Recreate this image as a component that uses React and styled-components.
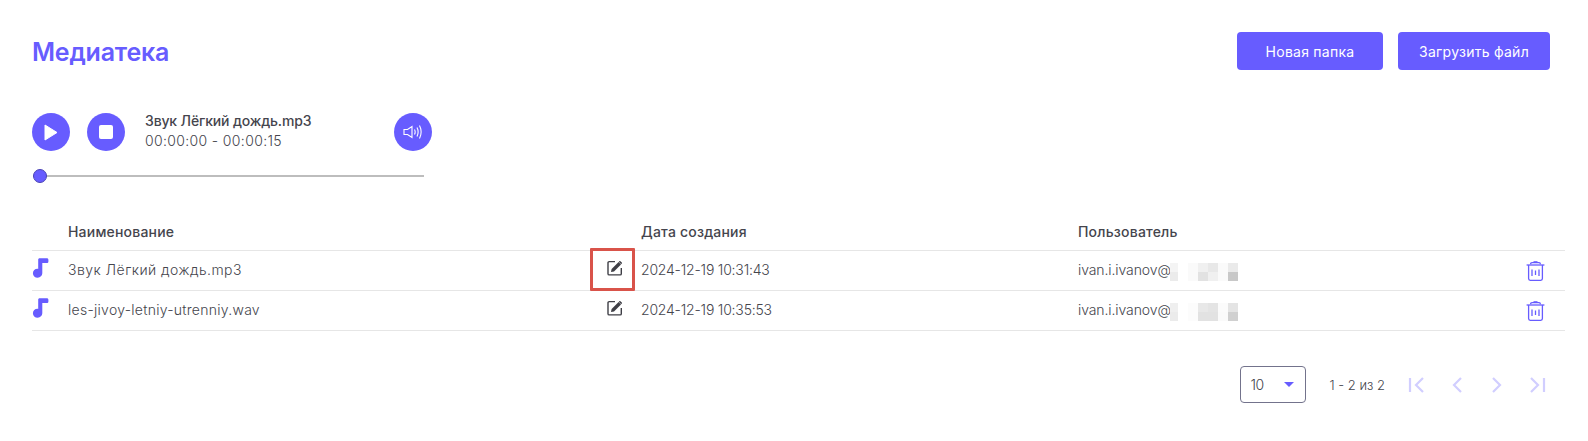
import React from 'react';
import styled, { createGlobalStyle } from 'styled-components';

const Global = createGlobalStyle`
  html, body { margin: 0; padding: 0; background: #fff; }
  body { font-family: "Inter", "Noto Sans", sans-serif; color: #45454d; }
`;
const ACCENT = '#675cff';

const Page = styled.div`
  width: 1588px; height: 441px; box-sizing: border-box; padding: 32px 23px 0 32px; overflow: hidden;
`;
const Header = styled.header`
  display: flex; justify-content: space-between; align-items: center; height: 38px; padding-right: 15px;
`;
const Title = styled.h1`
  margin: 0; padding-top: 2px; font-size: 25px; font-weight: 600; color: ${ACCENT}; letter-spacing: -0.2px;
`;
const Actions = styled.div`display: flex; gap: 15px;`;
const Button = styled.button`
  height: 38px; width: ${p => p.$w}px; border: 0; border-radius: 4px; background: ${ACCENT}; color: #fff;
  font: 400 14px "Inter", sans-serif; letter-spacing: 0.25px; padding: 0;
`;
const Player = styled.section`
  width: 400px; margin-top: 43px; display: flex; flex-direction: column;
`;
const Controls = styled.div`display: flex; align-items: center; gap: 17px;`;
const Round = styled.button`
  width: 38px; height: 38px; border-radius: 50%; border: 0; padding: 0; background: ${ACCENT};
  display: flex; align-items: center; justify-content: center; flex: none;
  margin-left: ${p => p.$push ? 'auto' : '0'};
`;
const Track = styled.div`display: flex; flex-direction: column; margin: -3px 0 0 3px; font-size: 14px; line-height: 20px;`;
const TrackName = styled.span`font-weight: 500; letter-spacing: -0.15px;`;
const TrackTime = styled.span`font-weight: 300; letter-spacing: 0.35px;`;
const Slider = styled.div`
  position: relative; width: 391px; margin: 18px 0 0 1px; height: 14px; display: flex; align-items: center;
`;
const Rail = styled.div`width: 100%; height: 2px; background: #bdbdbd;`;
const Knob = styled.div`
  position: absolute; left: 0; top: 0; width: 14px; height: 14px; box-sizing: border-box; border-radius: 50%;
  background: ${ACCENT}; border: 1.5px solid #4a43b5;
`;
const Table = styled.div`margin-top: 29px;`;
const Row = styled.div`
  display: grid; grid-template-columns: 36px 573px 437px 1fr 39px; align-items: center;
  height: ${p => p.$head ? '38px' : '36px'}; padding-bottom: ${p => p.$head ? '0' : '3px'};
  border-bottom: 1px solid #e6e6e6; box-sizing: content-box;
  font-size: 14px;
  font-weight: ${p => p.$head ? 500 : 300};
  letter-spacing: ${p => p.$head ? '0.2px' : '0'};
`;
const NameCell = styled.div`display: flex; align-items: center; justify-content: space-between; padding-right: 18px; position: relative;`;
const RowName = styled.span`letter-spacing: ${p => p.$s}px;`;
const DateCell = styled.span`letter-spacing: -0.2px;`;
const UserCell = styled.div`display: flex; align-items: center;`;
const UserName = styled.span`width: 92px; flex: none; white-space: nowrap; letter-spacing: -0.1px;`;
const Mask = styled.div`
  display: grid; grid-template-columns: 8px 10px repeat(5, 10px); grid-auto-rows: 9px; margin-top: 6px;
  position: relative;
`;
const Pixel = styled.span`background: ${p => p.$c};`;
const Highlight = styled.div`
  position: absolute; right: 6px; top: -13px; width: 45px; height: 43px; box-sizing: border-box;
  border: 3px solid #d9534a; border-radius: 1px; pointer-events: none;
`;
const IconWrap = styled.span`display: inline-flex; align-items: center; margin-top: ${p => p.$top || 0}px;`;
const Pagination = styled.div`
  display: flex; align-items: center; justify-content: flex-end; margin-top: 35px; padding-right: 19px;
`;
const PageSelect = styled.div`
  width: 66px; height: 37px; box-sizing: border-box; border: 1px solid #73738c; border-radius: 4px;
  display: flex; align-items: center; justify-content: space-between; padding: 0 11px 0 10px; font-size: 14px; font-weight: 300; letter-spacing: -0.5px;
`;
const Caret = styled.span`
  width: 0; height: 0; border-left: 5px solid transparent; border-right: 5px solid transparent; border-top: 5px solid ${ACCENT};
`;
const PageInfo = styled.span`margin: 0 23px 0 24px; font-size: 13px; font-weight: 300; letter-spacing: 0; white-space: nowrap;`;
const PageButtons = styled.div`display: flex; align-items: center; gap: 22px;`;

const Music = () => (
  <svg width="17" height="20" viewBox="0 0 17 20" fill={ACCENT}>
    <path d="M6.2 1.6C6.2.9 6.8.3 7.6.3h7.2c1 0 1.6.7 1.6 1.6v1.6c0 .9-.7 1.6-1.6 1.6H10.3v10.2c0 2.4-2 4.4-4.6 4.4C2.9 19.7.9 17.7.9 15.2s2-4.4 4.6-4.4c.3 0 .5 0 .7.1z" />
  </svg>
);
const Edit = () => (
  <svg width="16" height="16" viewBox="0 0 16 16" fill="none">
    <path d="M8 1.6H2.2C1.5 1.6 1 2.1 1 2.8v10.9c0 .7.5 1.2 1.2 1.2h10.9c.7 0 1.2-.5 1.2-1.2V8" stroke="#3f3f46" strokeWidth="1.4" />
    <path d="M4 12l.6-3L11.6 2l2.4 2.4-7 7z" fill="#3f3f46" />
    <path d="M12.4 1.2c.3-.3.7-.3 1 0l1.4 1.4c.3.3.3.7 0 1l-.6.6-2.4-2.4z" fill="#3f3f46" />
  </svg>
);
const Trash = () => (
  <svg width="19" height="20" viewBox="0 0 19 20" fill="none" stroke={ACCENT} strokeWidth="1.3">
    <path d="M.6 4h17.8" />
    <path d="M2.6 4v13.6c0 1 .7 1.7 1.6 1.7h10.6c.9 0 1.6-.7 1.6-1.7V4" />
    <path d="M4.6 3.2c0-1 .6-1.5 1.4-1.5h7c.8 0 1.4.5 1.4 1.5" />
    <path d="M7.5 1h4" strokeWidth="1.6" />
    <path d="M6 8.5v6.5M9.5 9.5v4.5M13 8.5v6.5" />
  </svg>
);
const PageIcon = ({ d }) => (
  <svg width="18" height="18" viewBox="0 0 18 18" fill="none" stroke="#d1ceff" strokeWidth="2.2">
    <path d={d} />
  </svg>
);

const grids = [
  ['#f4f4f4','#fff','#fafafa','#f0f0f0','#e8e8e8','#fafafa','#eaeaea','#ebebeb','#fff','#fafafa','#e2e2e2','#f0f0f0','#fafafa','#c8c8c8'],
  ['#efefef','#fff','#fcfcfc','#e8e8e8','#e4e4e4','#fbfbfb','#e4e4e4','#ebebeb','#fff','#fcfcfc','#e2e2e2','#e2e2e2','#fafafa','#d0d0d0'],
];
const rows = [
  { name: 'Звук Лёгкий дождь.mp3', date: '2024-12-19 10:31:43', mark: true, s: 0.45 },
  { name: 'les-jivoy-letniy-utrenniy.wav', date: '2024-12-19 10:35:53', s: 0.27 },
];

export default function App() {
  return (
    <Page>
      <Global />
      <Header>
        <Title>Медиатека</Title>
        <Actions>
          <Button $w={146}>Новая папка</Button>
          <Button $w={152}>Загрузить файл</Button>
        </Actions>
      </Header>
      <Player>
        <Controls>
          <Round><svg width="14" height="17" viewBox="0 0 14 17"><path d="M1 1v15l12-7.5z" fill="#fff" stroke="#fff" strokeLinejoin="round" /></svg></Round>
          <Round><svg width="14" height="14" viewBox="0 0 14 14"><rect width="14" height="14" rx="2" fill="#fff" /></svg></Round>
          <Track>
            <TrackName>Звук Лёгкий дождь.mp3</TrackName>
            <TrackTime>00:00:00 - 00:00:15</TrackTime>
          </Track>
          <Round $push>
            <svg width="20" height="16" viewBox="0 0 20 16" fill="none" stroke="#fff" strokeWidth="1.1">
              <path d="M1 5.5h3.5L9 2.5v11l-4.5-3H1z" />
              <path d="M11.5 5.5c.8 1.5.8 3.5 0 5M14 3.5c1.4 2.8 1.4 6.2 0 9M16.5 1.5c2 4 2 9 0 13" />
            </svg>
          </Round>
        </Controls>
        <Slider><Rail /><Knob /></Slider>
      </Player>
      <Table>
        <Row $head>
          <span />
          <span>Наименование</span>
          <span>Дата создания</span>
          <span>Пользователь</span>
          <span />
        </Row>
        {rows.map((r, i) => (
          <Row key={r.name}>
            <IconWrap $top={-2}><Music /></IconWrap>
            <NameCell>
              <RowName $s={r.s}>{r.name}</RowName>
              <IconWrap $top={-2}><Edit /></IconWrap>
              {r.mark && <Highlight />}
            </NameCell>
            <DateCell>{r.date}</DateCell>
            <UserCell>
              <UserName>ivan.i.ivanov@</UserName>
              <Mask>{grids[i].map((c, k) => <Pixel key={k} $c={c} />)}</Mask>
            </UserCell>
            <IconWrap $top={3}><Trash /></IconWrap>
          </Row>
        ))}
      </Table>
      <Pagination>
        <PageSelect>10<Caret /></PageSelect>
        <PageInfo>1 - 2 из 2</PageInfo>
        <PageButtons>
          <PageIcon d="M2 2v14M15 2L8 9l7 7" />
          <PageIcon d="M13 2L6 9l7 7" />
          <PageIcon d="M5 2l7 7-7 7" />
          <PageIcon d="M3 2l7 7-7 7M16 2v14" />
        </PageButtons>
      </Pagination>
    </Page>
  );
}
